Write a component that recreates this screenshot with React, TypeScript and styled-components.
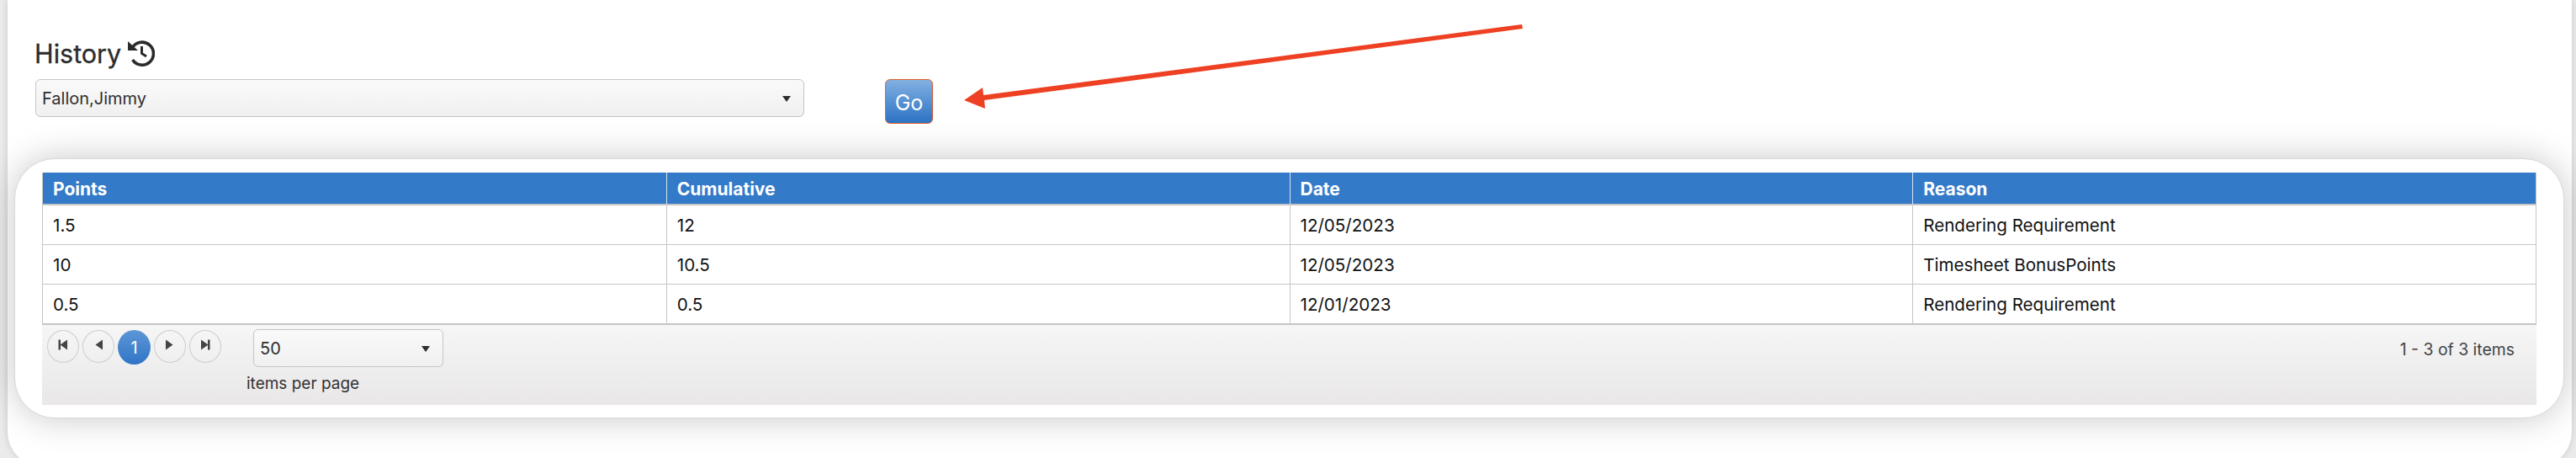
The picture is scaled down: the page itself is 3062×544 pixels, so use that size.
import React from 'react';
import styled, { createGlobalStyle } from 'styled-components';

const Global = createGlobalStyle`
  html, body {
    margin: 0;
    height: 544px;
    overflow: hidden;
    background: #ebebeb;
  }
  body {
    font-family: Inter, "Liberation Sans", Arial, sans-serif;
    color: #333;
  }
`;

const Page = styled.main`
  position: relative;
  box-sizing: border-box;
  width: 3048px;
  height: 554px;
  margin-left: 9px;
  padding: 42px 0 0 33px;
  background: #fff;
  border-radius: 0 0 41px 41px;
  box-shadow: 0 0 8px rgba(0, 0, 0, 0.14);
`;

const Heading = styled.h2`
  display: flex;
  align-items: center;
  gap: 8px;
  box-sizing: border-box;
  margin: 0 0 0 -1px;
  height: 40px;
  padding-top: 2px;
  font-size: 30.5px;
  font-weight: 400;
  -webkit-text-stroke: 0.3px #2b2b2b;
  color: #2b2b2b;
`;

const FilterRow = styled.div`
  display: flex;
  align-items: flex-start;
  gap: 96px;
  margin-top: 12px;
  height: 53px;
`;

const DropDown = styled.div<{ $width: number }>`
  box-sizing: border-box;
  display: flex;
  align-items: center;
  justify-content: space-between;
  width: ${(p) => p.$width}px;
  height: 45px;
  padding: 1px 15px 0 7px;
  border: 1px solid #c5c5c5;
  border-radius: 6px;
  background: linear-gradient(#fafafa, #f0f0f0);
  font-size: 20px;
  color: #2e2e2e;
`;

const Caret = styled.span`
  width: 0;
  height: 0;
  border-left: 5px solid transparent;
  border-right: 5px solid transparent;
  border-top: 7px solid #2e2e2e;
`;

const GoButton = styled.button`
  box-sizing: border-box;
  width: 57px;
  height: 53px;
  padding: 3px 0 0;
  border: 1px solid #dc5c2c;
  border-radius: 6px;
  background: linear-gradient(#82b0e2, #2c72c4);
  color: #fff;
  font-family: inherit;
  font-size: 25px;
`;

const Arrow = styled.svg`
  position: absolute;
  left: 0;
  top: 0;
  pointer-events: none;
`;

const Card = styled.section`
  box-sizing: border-box;
  margin: 41px 0 0 -25px;
  width: 3031px;
  height: 309px;
  padding: 16px 32px 15px 32px;
  background: #fff;
  border: 1px solid #d8d8d8;
  border-radius: 48px;
  box-shadow: 0 0 42px rgba(0, 0, 0, 0.22);
`;

const Table = styled.div`
  display: grid;
  grid-template-columns: repeat(4, 1fr);
  border-left: 1px solid #c5c5c5;
  border-right: 1px solid #c5c5c5;
`;

const HeaderCell = styled.div`
  box-sizing: border-box;
  height: 39px;
  padding-left: 12px;
  line-height: 39px;
  background: #337ac8;
  border-left: 1px solid #d8e4f2;
  border-bottom: 2px solid #c5c5c5;
  color: #fff;
  font-size: 21px;
  font-weight: 700;
  &:first-child { border-left: none; }
`;

const Cell = styled.div<{ $first?: boolean }>`
  box-sizing: border-box;
  height: 47px;
  padding-left: 12px;
  line-height: 48px;
  border-left: ${(p) => (p.$first ? 'none' : '1px solid #c5c5c5')};
  border-bottom: 1px solid #c5c5c5;
  color: #111;
  font-size: 20.6px;
`;

const Footer = styled.footer`
  display: flex;
  align-items: flex-start;
  box-sizing: border-box;
  height: 96px;
  padding: 4px 26px 0 6px;
  border-top: 1px solid #c5c5c5;
  background: linear-gradient(#f6f6f6, #e9e7e8);
`;

const Pager = styled.nav`
  display: flex;
  align-items: flex-start;
  gap: 4px;
  margin-top: 2px;
`;

const PageButton = styled.button<{ $active?: boolean }>`
  box-sizing: border-box;
  display: flex;
  align-items: center;
  justify-content: center;
  width: ${(p) => (p.$active ? 39 : 38)}px;
  height: ${(p) => (p.$active ? 41 : 39)}px;
  padding: 0 0 ${(p) => (p.$active ? 0 : 5)}px;
  border: ${(p) => (p.$active ? 'none' : '1px solid #cdcdcd')};
  border-radius: 50%;
  background: ${(p) => (p.$active ? 'linear-gradient(#5d96d6, #2f75c6)' : 'transparent')};
  color: #fff;
  font-family: inherit;
  font-size: 20px;
`;

const PageSize = styled.div`
  display: flex;
  flex-direction: column;
  margin: 1px 0 0 38px;
`;

const PageSizeLabel = styled.span`
  margin: 8px 0 0 -8px;
  font-size: 19px;
  color: #333;
`;

const ItemCount = styled.span`
  margin-left: auto;
  margin-top: 13px;
  font-size: 19.4px;
  color: #444;
`;

const StepIcon = ({ dir, bar }: { dir: 'left' | 'right'; bar?: boolean }) => (
  <svg width="12" height="13" viewBox="0 0 12 13" fill="#444">
    {dir === 'left' ? (
      <>
        <path d="M11 0.5v12L2.5 6.5z" />
        {bar && <rect x="0.5" y="0.5" width="2.5" height="12" />}
      </>
    ) : (
      <>
        <path d="M1 0.5v12l8.5-6z" />
        {bar && <rect x="9" y="0.5" width="2.5" height="12" />}
      </>
    )}
  </svg>
);

const HistoryIcon = () => (
  <svg width="32" height="32" viewBox="0 0 32 32" fill="none" stroke="#2b2b2b" strokeWidth="3.6">
    <path d="M5.5 9.5A13.5 13.5 0 1 1 5.6 24" />
    <path d="M0 2v11h12z" fill="#2b2b2b" stroke="none" />
    <path d="M16.5 8v8.5l5.5 3.5" strokeWidth="3" />
  </svg>
);

const rows = [
  ['1.5', '12', '12/05/2023', 'Rendering Requirement'],
  ['10', '10.5', '12/05/2023', 'Timesheet BonusPoints'],
  ['0.5', '0.5', '12/01/2023', 'Rendering Requirement'],
];

export default function App() {
  return (
    <Page>
      <Global />
      <Heading>
        History <HistoryIcon />
      </Heading>
      <FilterRow>
        <DropDown $width={914}>
          Fallon,Jimmy
          <Caret />
        </DropDown>
        <GoButton>Go</GoButton>
      </FilterRow>
      <Arrow width="3048" height="554" viewBox="9 0 3048 554">
        <path d="M1146 119L1168 104L1169 113L1809 29L1810 34L1170 119L1171 129Z" fill="#ee4023" />
      </Arrow>
      <Card>
        <Table>
          {['Points', 'Cumulative', 'Date', 'Reason'].map((h) => (
            <HeaderCell key={h}>{h}</HeaderCell>
          ))}
          {rows.map((row) =>
            row.map((value, i) => (
              <Cell key={`${row[0]}-${i}`} $first={i === 0}>
                {value}
              </Cell>
            )),
          )}
        </Table>
        <Footer>
          <Pager>
            <PageButton><StepIcon dir="left" bar /></PageButton>
            <PageButton><StepIcon dir="left" /></PageButton>
            <PageButton $active>1</PageButton>
            <PageButton><StepIcon dir="right" /></PageButton>
            <PageButton><StepIcon dir="right" bar /></PageButton>
          </Pager>
          <PageSize>
            <DropDown $width={226}>
              50
              <Caret />
            </DropDown>
            <PageSizeLabel>items per page</PageSizeLabel>
          </PageSize>
          <ItemCount>1 - 3 of 3 items</ItemCount>
        </Footer>
      </Card>
    </Page>
  );
}
